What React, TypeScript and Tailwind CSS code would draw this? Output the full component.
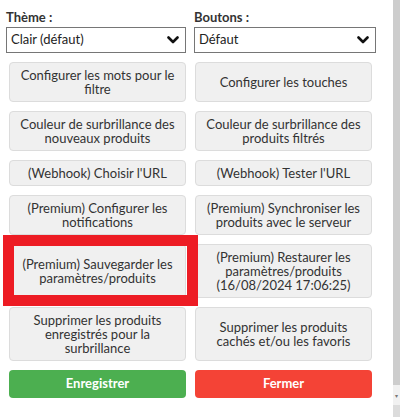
import React from 'react';

const FONT = { fontFamily: 'Lato, "Open Sans", sans-serif' };

function Chevron() {
    return (
        <svg width="12" height="8" viewBox="0 0 12 8" className="shrink-0">
            <polyline points="1.5,1.5 6,6 10.5,1.5" fill="none" stroke="#111" strokeWidth="2.6" strokeLinecap="round" strokeLinejoin="round" />
        </svg>
    );
}

function Picker({ label, value, width }: { label: string; value: string; width: string }) {
    return (
        <div className={width}>
            <div className="mb-[2px] text-[13px] font-bold leading-4 text-[#333]">{label}</div>
            <div className="flex h-[26px] items-center justify-between border border-[#767676] bg-white pl-[4px] pr-[6px] text-[13px] text-[#222]">
                <span>{value}</span>
                <Chevron />
            </div>
        </div>
    );
}

function Btn({ children }: { children: React.ReactNode }) {
    return (
        <button className="rounded-[4px] border border-[#dcdcdc] bg-[#f0f0f0] px-2 py-[5px] text-center text-[13px] leading-[14px] text-[#333]">
            {children}
        </button>
    );
}

export default function App() {
    return (
        <div className="flex h-[417px] w-[400px] bg-white" style={FONT}>
            <div className="relative w-[393px] pt-[9px]">
                <div className="flex gap-[8px] pl-[6px]">
                    <Picker label="Thème :" value="Clair (défaut)" width="w-[180px]" />
                    <Picker label="Boutons :" value="Défaut" width="w-[182px]" />
                </div>

                <div className="mt-[9px] grid grid-cols-[177px_177px] gap-[9px] pl-[9px]">
                    <Btn>Configurer les mots pour le filtre</Btn>
                    <Btn>Configurer les touches</Btn>
                    <Btn>Couleur de surbrillance des nouveaux produits</Btn>
                    <Btn>Couleur de surbrillance des produits filtrés</Btn>
                    <Btn>(Webhook) Choisir l'URL</Btn>
                    <Btn>(Webhook) Tester l'URL</Btn>
                    <Btn>(Premium) Configurer les notifications</Btn>
                    <Btn>(Premium) Synchroniser les produits avec le serveur</Btn>
                    <Btn>(Premium) Sauvegarder les paramètres/produits</Btn>
                    <Btn>(Premium) Restaurer les paramètres/produits (16/08/2024 17:06:25)</Btn>
                    <Btn>Supprimer les produits enregistrés pour la surbrillance</Btn>
                    <Btn>Supprimer les produits cachés et/ou les favoris</Btn>
                    <button className="h-[28px] rounded-[4px] bg-[#4caf50] text-[13px] font-bold text-white">Enregistrer</button>
                    <button className="h-[28px] rounded-[4px] bg-[#f44336] text-[13px] font-bold text-white">Fermer</button>
                </div>

                {/* annotation rectangle around the save button */}
                <div className="pointer-events-none absolute left-[3px] top-[235px] h-[71px] w-[195px] border-[11px] border-[#ed1c24]" />
            </div>

            {/* scrollbar */}
            <div className="flex w-[7px] flex-col">
                <div className="h-[385px] bg-[#cdcdcd]" />
                <div className="flex h-[20px] items-center justify-center bg-[#f1f1f1] text-[6px] text-[#777]">▾</div>
                <div className="flex-1 bg-[#dcdcdc]" />
            </div>
        </div>
    );
}
